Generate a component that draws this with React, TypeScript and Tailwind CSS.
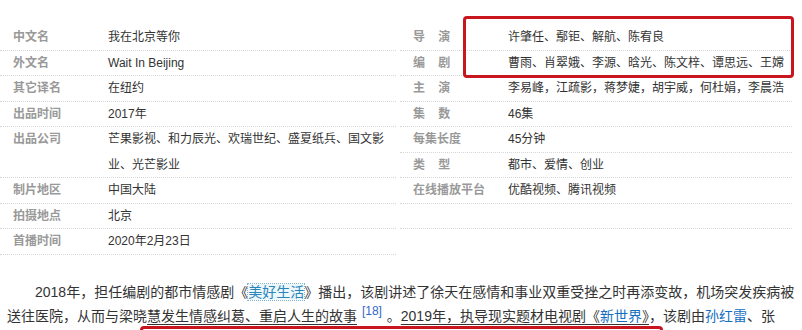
import React from "react";

const NB = "\u00a0\u00a0\u00a0\u00a0";

type Row = { label: string; value?: React.ReactNode; lines?: number };

const left: Row[] = [
  { label: "中文名", value: "我在北京等你" },
  { label: "外文名", value: "Wait In Beijing" },
  { label: "其它译名", value: "在纽约" },
  { label: "出品时间", value: "2017年" },
  {
    label: "出品公司",
    value: (
      <>
        芒果影视、和力辰光、欢瑞世纪、盛夏纸兵、国文影
        <br />
        业、光芒影业
      </>
    ),
    lines: 2,
  },
  { label: "制片地区", value: "中国大陆" },
  { label: "拍摄地点", value: "北京" },
  { label: "首播时间", value: "2020年2月23日" },
];

const right: Row[] = [
  { label: `导${NB}演`, value: "许肇任、鄢钜、解航、陈宥良" },
  { label: `编${NB}剧`, value: "曹雨、肖翠娥、李源、晗光、陈文梓、谭思远、王嫦" },
  { label: `主${NB}演`, value: "李易峰，江疏影，蒋梦婕，胡宇威，何杜娟，李晨浩" },
  { label: `集${NB}数`, value: "46集" },
  { label: "每集长度", value: "45分钟" },
  { label: `类${NB}型`, value: "都市、爱情、创业" },
  { label: "在线播放平台", value: "优酷视频、腾讯视频" },
  { label: "", value: "" },
];

function InfoRow({ row }: { row: Row }) {
  const two = row.lines === 2;
  return (
    <div
      className={`flex border-b border-dotted border-[#d6d6d6] leading-[25.5px] ${
        two ? "h-[51px]" : "h-[25.5px]"
      }`}
    >
      <div className="w-[108px] shrink-0 pl-[13px] font-bold text-[#999] whitespace-nowrap">
        {row.label}
      </div>
      <div className="text-[#333] whitespace-nowrap">{row.value}</div>
    </div>
  );
}

export default function App() {
  return (
    <div
      className="relative h-[330px] w-[802px] overflow-hidden bg-white text-[12px]"
      style={{ fontFamily: '"Liberation Sans", "Noto Sans CJK SC", sans-serif' }}
    >
      <div className="flex pt-[25px]">
        <div className="w-[396px]">
          {left.map((r, i) => (
            <InfoRow key={i} row={r} />
          ))}
        </div>
        <div className="ml-[4px] w-[392px]">
          {right.map((r, i) => (
            <InfoRow key={i} row={r} />
          ))}
        </div>
      </div>

      <p className="mt-[25.5px] pl-[7px] text-[14px] leading-[24px] text-[#333] indent-[2em]">
        2018年，担任编剧的都市情感剧《
        <a className="text-[#2a86b8] bg-[#eef7fb] outline-1 outline-dotted outline-[#7fb6cf]">美好生活</a>
        》播出，该剧讲述了徐天在感情和事业双重受挫之时再添变故，机场突发疾病被
        <br />
        送往医院，从而与梁晓
        <span className="underline decoration-[#333] underline-offset-[3px]">慧发生情感纠葛、重启人生的故事</span>{" "}
        <sup className="text-[12px] text-[#3366cc] px-[1px]">[18]</sup> 。
        <span className="underline decoration-[#333] underline-offset-[3px]">
          2019年，执导现实题材电视剧《<a className="text-[#136ec2]">新世界</a>》
        </span>
        ，该剧由<a className="text-[#136ec2]">孙红雷</a>、张译、尹昉主演，讲述了北平解放前夕的故事。
      </p>

      <div className="absolute left-[463px] top-[16px] h-[62px] w-[331px] rounded-[4px] border-[3px] border-[#c9151e]" />
      <div className="absolute left-[140px] top-[326px] h-[30px] w-[523px] rounded-[4px] border-[3px] border-[#c9151e]" />
    </div>
  );
}
